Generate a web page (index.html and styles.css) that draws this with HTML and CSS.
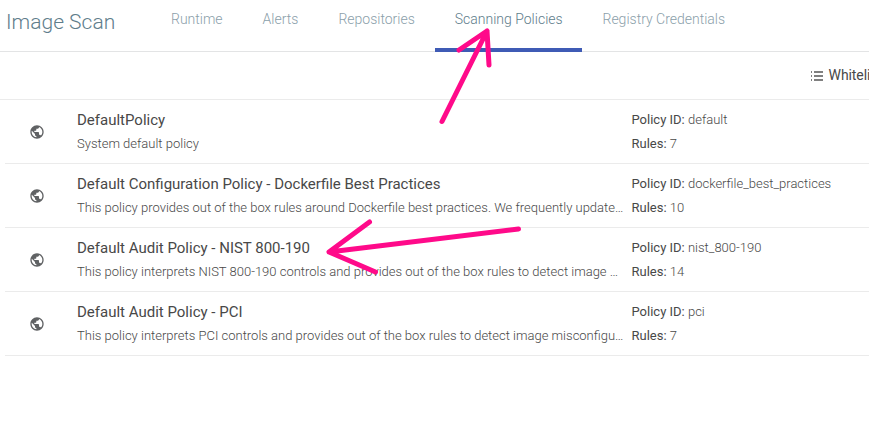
FILE: index.html
```html
<!DOCTYPE html>
<html lang="en">
<head>
<meta charset="utf-8">
<title>Image Scan</title>
<link rel="stylesheet" href="styles.css">
</head>
<body>
<svg class="defs" width="0" height="0" aria-hidden="true">
  <symbol id="globe" viewBox="0 0 24 24"><path d="M12 2C6.48 2 2 6.48 2 12s4.48 10 10 10 10-4.48 10-10S17.52 2 12 2zm-1 17.93c-3.95-.49-7-3.85-7-7.93 0-.62.08-1.21.21-1.79L9 15v1c0 1.1.9 2 2 2v1.93zm6.9-2.54c-.26-.81-1-1.39-1.9-1.39h-1v-3c0-.55-.45-1-1-1H8v-2h2c.55 0 1-.45 1-1V7h2c1.1 0 2-.9 2-2v-.41c2.93 1.19 5 4.06 5 7.41 0 2.08-.8 3.97-2.1 5.39z"/></symbol>
</svg>
<header class="header">
  <h1 class="title">Image Scan</h1>
  <nav class="tabs">
    <a class="tab">Runtime</a>
    <a class="tab">Alerts</a>
    <a class="tab">Repositories</a>
    <a class="tab active">Scanning Policies</a>
    <a class="tab">Registry Credentials</a>
  </nav>
</header>
<div class="toolbar">
  <svg class="list-icon" viewBox="0 0 12 10"><path d="M0 0h1v2H0zM3 0h9v2H3zM0 4h1v2H0zM3 4h9v2H3zM0 8h1v2H0zM3 8h9v2H3z"/></svg>
  <span class="action">Whitelist</span>
</div>
<main class="policies">
  <section class="policy">
    <svg class="globe"><use href="#globe"/></svg>
    <div class="info"><h2 class="name">DefaultPolicy</h2><p class="desc">System default policy</p></div>
    <div class="meta"><p><b>Policy ID:</b> default</p><p><b>Rules:</b> 7</p></div>
  </section>
  <section class="policy">
    <svg class="globe"><use href="#globe"/></svg>
    <div class="info"><h2 class="name">Default Configuration Policy - Dockerfile Best Practices</h2><p class="desc">This policy provides out of the box rules around Dockerfile best practices. We frequently update…</p></div>
    <div class="meta"><p><b>Policy ID:</b> dockerfile_best_practices</p><p><b>Rules:</b> 10</p></div>
  </section>
  <section class="policy">
    <svg class="globe"><use href="#globe"/></svg>
    <div class="info"><h2 class="name">Default Audit Policy - NIST 800-190</h2><p class="desc">This policy interprets NIST 800-190 controls and provides out of the box rules to detect image …</p></div>
    <div class="meta"><p><b>Policy ID:</b> nist_800-190</p><p><b>Rules:</b> 14</p></div>
  </section>
  <section class="policy">
    <svg class="globe"><use href="#globe"/></svg>
    <div class="info"><h2 class="name">Default Audit Policy - PCI</h2><p class="desc">This policy interprets PCI controls and provides out of the box rules to detect image misconfigu…</p></div>
    <div class="meta"><p><b>Policy ID:</b> pci</p><p><b>Rules:</b> 7</p></div>
  </section>
</main>
<svg class="arrows" viewBox="0 0 869 435">
  <path d="M442 121.500L487 31M459 50L487 31L489 65"/>
  <path d="M518.500 229L329 252M369.500 222L329 252L375.500 272"/>
</svg>
</body>
</html>
```
FILE: styles.css
```css
* { box-sizing: border-box; }
body {
  margin: 0;
  height: 435px;
  position: relative;
  overflow: hidden;
  background: #fff;
  color: #484848;
  font-family: Roboto, "Liberation Sans", sans-serif;
}
h1, h2, p { margin: 0; font-weight: inherit; }
.defs { position: absolute; }
.header {
  display: flex;
  height: 52px;
  border-bottom: 1px solid #e3e4e5;
}
.title {
  width: 151px;
  padding-left: 6px;
  font-size: 21px;
  font-weight: 300;
  line-height: 44px;
  color: #607d8b;
  white-space: nowrap;
}
.tabs { display: flex; height: 52px; }
.tab {
  height: 52px;
  padding: 0 20px;
  font-size: 14px;
  font-weight: 300;
  line-height: 38px;
  color: #8ba0aa;
  white-space: nowrap;
}
.tab.active {
  width: 147px;
  margin-right: 0.7px;
  color: #607d8b;
  border-bottom: 4px solid #3f5bb5;
}
.toolbar {
  display: flex;
  align-items: center;
  height: 48px;
  padding-left: 811px;
  border-bottom: 1px solid #ebebeb;
}
.list-icon {
  flex: none;
  width: 12px;
  height: 10px;
  margin-right: 5.6px;
  fill: #808080;
}
.action {
  font-size: 14px;
  letter-spacing: -0.1px;
  line-height: 16px;
  margin-top: -1px;
  white-space: nowrap;
}
.policies { margin-left: 5px; }
.policy {
  display: flex;
  align-items: center;
  height: 64px;
  border-bottom: 1px solid #ebebeb;
}
.globe {
  flex: none;
  width: 16px;
  height: 16px;
  margin: 0 32px 0 24px;
  fill: #606264;
}
.info { flex: none; width: 554.5px; }
.name { font-size: 15px; line-height: 24px; }
.desc {
  font-size: 13px;
  font-weight: 300;
  line-height: 24px;
  white-space: nowrap;
}
.meta { font-size: 13px; font-weight: 300; line-height: 24px; white-space: nowrap; }
.meta b { font-weight: 400; }
.arrows {
  position: absolute;
  top: 0;
  left: 0;
  width: 869px;
  height: 435px;
  fill: none;
  stroke: #ff0a8a;
  stroke-width: 5;
  stroke-linecap: round;
  stroke-linejoin: round;
}
```
